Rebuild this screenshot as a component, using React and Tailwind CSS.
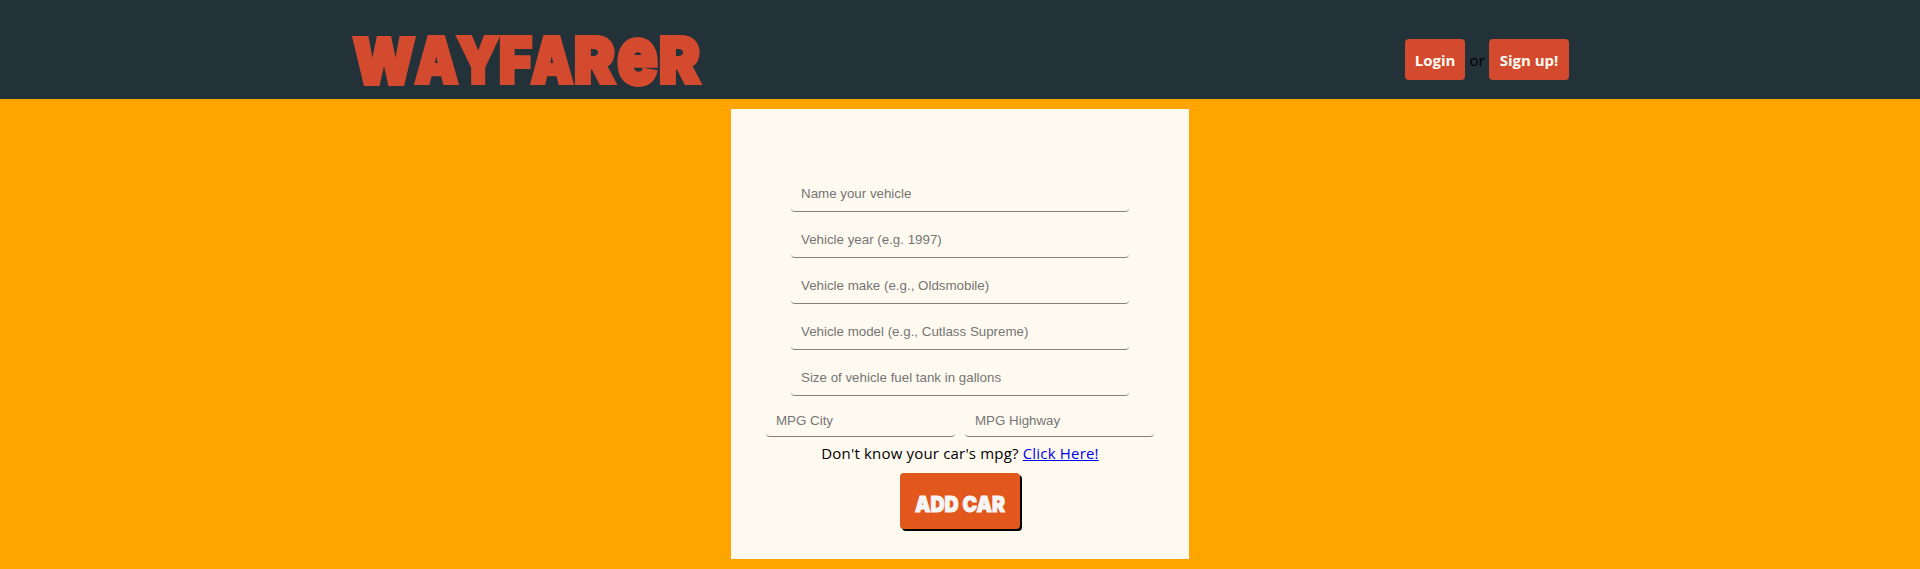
const LETTERS = [
  { ch: 'W', x: 353, y: 84, w: 62 },
  { ch: 'A', x: 415, y: 83, w: 43 },
  { ch: 'Y', x: 457, y: 83, w: 42 },
  { ch: 'F', x: 499, y: 83, w: 33 },
  { ch: 'A', x: 531, y: 83, w: 42 },
  { ch: 'R', x: 574, y: 83, w: 41 },
  { ch: 'e', x: 617, y: 84, w: 41, size: 82 },
  { ch: 'R', x: 659, y: 83, w: 41 },
];

const FIELDS = [
  'Name your vehicle',
  'Vehicle year (e.g. 1997)',
  'Vehicle make (e.g., Oldsmobile)',
  'Vehicle model (e.g., Cutlass Supreme)',
  'Size of vehicle fuel tank in gallons',
];

const inputBase =
  "block rounded-[4px] border-0 border-b border-[#808080] bg-transparent px-[10px] font-['Liberation_Sans',Arial,sans-serif] text-[13.333px] leading-[15px] placeholder:text-[#757575] placeholder:opacity-100 outline-none";

function Logo() {
  return (
    <svg width="360" height="99" viewBox="350 0 360 99" className="block overflow-visible" role="img">
      <text
        fontFamily="Inter, sans-serif"
        fontWeight="900"
        fontSize="63"
        fill="#d34a2e"
        stroke="#d34a2e"
        strokeWidth="4"
        strokeLinejoin="miter"
        strokeMiterlimit="2"
      >
        {LETTERS.map((l, i) => (
          <tspan key={i} x={l.x} y={l.y} fontSize={l.size || 63} textLength={l.w} lengthAdjust="spacingAndGlyphs">
            {l.ch}
          </tspan>
        ))}
      </text>
    </svg>
  );
}

export default function App() {
  return (
    <div className="h-[569px] w-full overflow-hidden bg-[#ffa500] font-['Open_Sans',sans-serif] text-[16px] text-black">
      <header className="flex h-[99px] items-start justify-between bg-[#233139] pr-[351px] pl-[350px]">
        <Logo />
        <div className="mt-[39px] flex h-[41px] items-center">
          <a className="flex h-[41px] w-[60px] items-center justify-center rounded-[4px] bg-[#d34a2e] pt-[2px] text-[15px] font-bold text-[#fffaf0]">
            Login
          </a>
          <span className="w-[24px] pt-[2px] text-center text-[15px]">or</span>
          <a className="flex h-[41px] w-[80px] items-center justify-center rounded-[4px] bg-[#d34a2e] pt-[2px] text-[15px] font-bold whitespace-nowrap text-[#fffaf0]">
            Sign up!
          </a>
        </div>
      </header>

      <main className="mx-auto mt-[10px] flex h-[450px] w-[458px] flex-col items-center bg-[#fffaf0] pt-[67px]">
        <div className="flex flex-col gap-[10px]">
          {FIELDS.map((label) => (
            <input key={label} placeholder={label} className={`${inputBase} h-[36px] w-[338px] py-[10px]`} />
          ))}
        </div>
        <div className="mt-[7px] flex gap-[10px]">
          <input placeholder="MPG City" className={`${inputBase} h-[34px] w-[189px] pt-[10px] pb-[8px]`} />
          <input placeholder="MPG Highway" className={`${inputBase} h-[34px] w-[189px] pt-[10px] pb-[8px]`} />
        </div>
        <p className="mt-[5px] h-[22px] text-[15px] leading-[22px] tracking-[0.18px] whitespace-nowrap">
          Don't know your car's mpg?{' '}
          <a className="text-[#0000ee] underline">Click Here!</a>
        </p>
        <button className="mt-[9px] flex h-[56px] w-[120px] items-center justify-center rounded-[4px] bg-[#e2571b] pt-[5px] shadow-[2px_2px_0_#000]">
          <svg width="92" height="24" viewBox="0 0 92 24" className="block overflow-visible">
            <text
              x="1"
              y="20"
              textLength="90"
              lengthAdjust="spacingAndGlyphs"
              fontFamily="Inter, sans-serif"
              fontWeight="900"
              fontSize="22"
              fill="#f5f5f5"
              stroke="#f5f5f5"
              strokeWidth="1"
            >
              ADD CAR
            </text>
          </svg>
        </button>
      </main>
    </div>
  );
}
